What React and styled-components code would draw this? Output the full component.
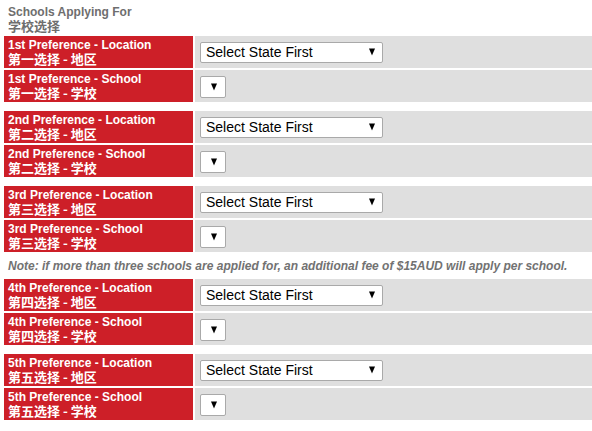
import { createGlobalStyle, styled } from 'styled-components';

const GlobalStyle = createGlobalStyle`
	html, body {
		margin: 0;
		padding: 0;
		background: #ffffff;
	}
	body {
		font-family: 'Liberation Sans', Arial, 'Noto Sans CJK SC', sans-serif;
	}
`;

const ordinals = [
	{ en: '1st', zh: '一' },
	{ en: '2nd', zh: '二' },
	{ en: '3rd', zh: '三' },
	{ en: '4th', zh: '四' },
	{ en: '5th', zh: '五' },
];

const Page = styled.div`
	width: 592px;
	padding: 5px 0 0 4px;
	box-sizing: border-box;
`;

const Heading = styled.div`
	padding: 0 4px 3px;
	color: #6e6e6e;
	font-size: 12px;
	font-weight: bold;
	line-height: 14px;
`;

const Zh = styled.span`
	display: block;
	font-family: 'Noto Sans CJK SC', sans-serif;
	font-size: 13px;
	line-height: 14px;
`;

const Table = styled.div`
	display: flex;
	flex-direction: column;
	gap: 2px;
`;

const Row = styled.div`
	display: grid;
	grid-template-columns: 189px 1fr;
	column-gap: 2px;
	height: 32px;
`;

const Spacer = styled.div`
	height: 5px;
`;

const Note = styled.div`
	height: 23px;
	display: flex;
	align-items: center;
	padding: 0 4px;
	color: #727272;
	font-size: 12px;
	font-weight: bold;
	font-style: italic;
`;

const Label = styled.div`
	background: #cd1f28;
	color: #ffffff;
	font-size: 12px;
	font-weight: bold;
	line-height: 14px;
	padding: 2px 4px;
	display: flex;
	flex-direction: column;
	justify-content: center;
	white-space: nowrap;
`;

const Field = styled.div`
	background: #dfdfdf;
	display: flex;
	align-items: center;
	padding-left: 5px;
`;

const SelectBox = styled.div`
	position: relative;
	width: ${(p) => p.width}px;
	height: ${(p) => p.height}px;
	margin-top: ${(p) => (p.small ? '2px' : '0')};
	border: 1px solid #a9a9a9;
	border-radius: 2px;
	background: #ffffff;
	box-sizing: border-box;
	display: flex;
	align-items: center;
	padding-left: 5px;
	font-family: 'Liberation Sans', Arial, sans-serif;
	font-size: 14px;
	color: #000000;
`;

const Arrow = styled.span`
	position: absolute;
	right: ${(p) => (p.small ? '8px' : '7px')};
	top: 50%;
	transform: translateY(-50%);
	width: 0;
	height: 0;
	border-left: 3px solid transparent;
	border-right: 3px solid transparent;
	border-top: 7px solid #000000;
`;

const PrefGroup = ({ o }) => (
	<>
		<Row>
			<Label>
				<span>{o.en} Preference - Location</span>
				<Zh>第{o.zh}选择 - 地区</Zh>
			</Label>
			<Field>
				<SelectBox width={183} height={21}>
					Select State First
					<Arrow />
				</SelectBox>
			</Field>
		</Row>
		<Row>
			<Label>
				<span>{o.en} Preference - School</span>
				<Zh>第{o.zh}选择 - 学校</Zh>
			</Label>
			<Field>
				<SelectBox small width={26} height={22}>
					<Arrow small />
				</SelectBox>
			</Field>
		</Row>
	</>
);

export default function App() {
	return (
		<Page>
			<GlobalStyle />
			<Heading>
				Schools Applying For
				<Zh>学校选择</Zh>
			</Heading>
			<Table>
				<PrefGroup o={ordinals[0]} />
				<Spacer />
				<PrefGroup o={ordinals[1]} />
				<Spacer />
				<PrefGroup o={ordinals[2]} />
				<Note>
					Note: if more than three schools are applied for, an additional fee of $15AUD will
					apply per school.
				</Note>
				<PrefGroup o={ordinals[3]} />
				<Spacer />
				<PrefGroup o={ordinals[4]} />
			</Table>
		</Page>
	);
}
